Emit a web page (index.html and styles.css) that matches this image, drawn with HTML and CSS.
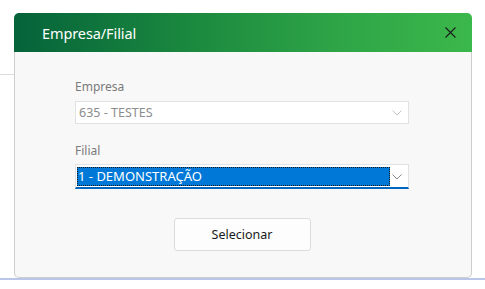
FILE: index.html
```html
<!DOCTYPE html>
<html lang="pt-BR">
<head>
  <meta charset="UTF-8" />
  <title>Empresa/Filial</title>
  <link rel="stylesheet" href="styles.css">
</head>
<body>

  <div class="page-top"></div>
  <div class="page-rest"></div>

  <div class="dialog">
    <div class="dialog-header">
      <span class="dialog-title">Empresa/Filial</span>
      <button class="close-btn" aria-label="Fechar">
        <svg width="11" height="11" viewBox="0 0 11 11">
          <path d="M0.5 0.5 L10.5 10.5 M10.5 0.5 L0.5 10.5" stroke="#1b1b1b" stroke-width="1.1" fill="none"/>
        </svg>
      </button>
    </div>

    <div class="dialog-body">
      <label class="field-label">Empresa</label>
      <div class="select disabled">
        <span class="select-value">635 - TESTES</span>
        <svg class="chevron" width="10" height="6" viewBox="0 0 10 6">
          <path d="M0.5 0.5 L5 5 L9.5 0.5" stroke="#c4c4c4" stroke-width="1" fill="none"/>
        </svg>
      </div>

      <label class="field-label filial">Filial</label>
      <div class="select focused">
        <span class="select-value selected">1 - DEMONSTRAÇÃO</span>
        <svg class="chevron" width="10" height="6" viewBox="0 0 10 6">
          <path d="M0.5 0.5 L5 5 L9.5 0.5" stroke="#8a8a8a" stroke-width="1" fill="none"/>
        </svg>
      </div>

      <div class="actions">
        <button class="btn">Selecionar</button>
      </div>
    </div>
  </div>

</body>
</html>
```

FILE: styles.css
```css
body {
  margin: 0;
  background: #ffffff;
  font-family: 'Noto Sans', 'Open Sans', sans-serif;
  height: 289px;
  overflow: hidden;
  position: relative;
}

.page-top {
  width: 60px;
  height: 74px;
  border-bottom: 1px solid #dcdcdc;
}

.page-rest {
  height: 203px;
  border-bottom: 2px solid #b9c6e6;
}

.dialog {
  position: absolute;
  left: 14px;
  top: 13px;
  width: 458px;
}

.dialog-header {
  height: 39px;
  display: flex;
  align-items: center;
  justify-content: space-between;
  padding: 0 16px 0 28px;
  background: linear-gradient(90deg, #05633a 0%, #1c8a3f 40%, #2ea447 70%, #3bb84b 100%);
  border-radius: 5px 5px 0 0;
}

.dialog-title {
  color: #ffffff;
  font-size: 14.5px;
  letter-spacing: -0.1px;
}

.close-btn {
  background: none;
  border: none;
  padding: 0;
  width: 11px;
  height: 11px;
  display: flex;
  cursor: pointer;
}

.dialog-body {
  background: #f8f8f8;
  border: 1px solid #cdcdcd;
  border-top: none;
  border-radius: 0 0 5px 5px;
  padding: 26px 62px 26px 60px;
  display: flex;
  flex-direction: column;
}

.field-label {
  font-size: 12px;
  line-height: 18px;
  color: #7a7a7a;
  margin-bottom: 5px;
}

.field-label.filial {
  margin-top: 18px;
  margin-bottom: 4px;
}

.select {
  height: 23px;
  background: #ffffff;
  border: 1px solid #e2e2e2;
  box-sizing: border-box;
  display: flex;
  align-items: center;
  justify-content: space-between;
  padding: 0 5px 0 2px;
}

.select.disabled .select-value {
  color: #8c8c8c;
  padding-left: 1px;
}

.select.focused {
  height: 25px;
  border-bottom: 2px solid #0067c0;
  padding: 2px 5px 1px 1px;
}

.select-value {
  font-size: 12.5px;
  line-height: 19px;
}

.select-value.selected {
  flex: 0 0 313px;
  box-sizing: border-box;
  height: 19px;
  background: #0078d7;
  color: #ffffff;
  font-size: 13px;
  outline: 1px dotted #1a1a1a;
  outline-offset: -1px;
  padding-left: 1px;
}

.chevron {
  margin-right: 1px;
}

.actions {
  display: flex;
  justify-content: center;
  margin-top: 29px;
}

.btn {
  width: 137px;
  height: 33px;
  background: #fdfdfd;
  border: 1px solid #dcdcdc;
  border-radius: 3px;
  font-family: 'Noto Sans', 'Open Sans', sans-serif;
  font-size: 12.5px;
  color: #1a1a1a;
  cursor: pointer;
}
```
